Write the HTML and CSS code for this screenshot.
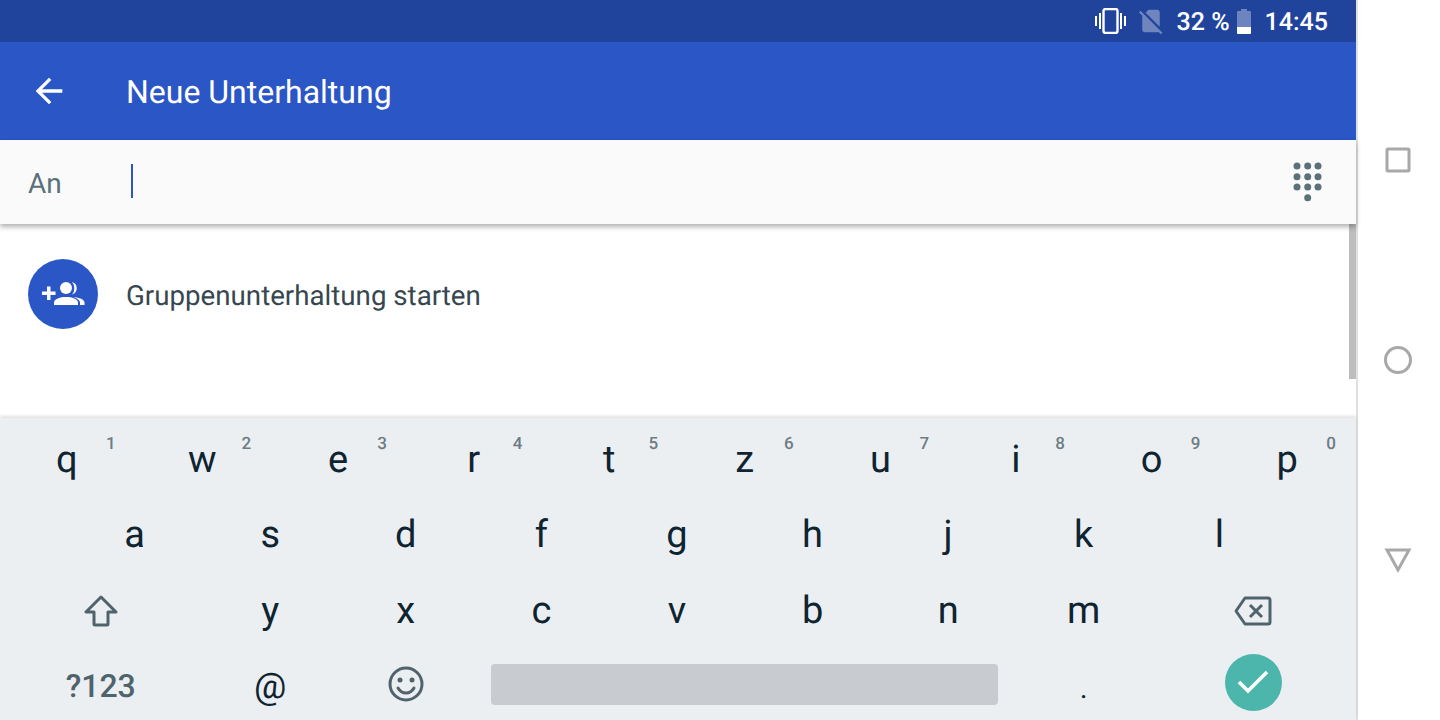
FILE: index.html
```html
<html>
<head>
    <link rel="stylesheet" href="styles.css">
</head>
<body>
    <div class="device">
        <div class="screen">
            <!-- Status bar -->
            <div class="status-bar">
                <svg class="icon-vibrate" viewBox="0 0 31 26">
                    <rect x="0" y="8" width="2" height="10"/>
                    <rect x="4" y="5" width="2" height="16"/>
                    <rect x="25" y="5" width="2" height="16"/>
                    <rect x="29" y="8" width="2" height="10"/>
                    <rect class="phone" x="8.500" y="1" width="14" height="24" rx="2"/>
                </svg>
                <svg class="icon-sim" viewBox="0 0 24 24"><path d="M18.99 5c0-1.1-.89-2-1.99-2h-7L7.66 5.34 19 16.68 18.99 5zM3.65 3.88L2.38 5.15 5 7.77V19c0 1.1.9 2 2 2h10.01c.35 0 .67-.1.96-.26l1.88 1.88 1.27-1.27L3.65 3.88z"/></svg>
                <span class="battery-text">32 %</span>
                <svg class="icon-battery" viewBox="0 0 14 25">
                    <path class="battery-empty" d="M4 0h6v2h3a1 1 0 0 1 1 1v15H0V3a1 1 0 0 1 1-1h3z"/>
                    <path d="M0 18h14v6a1 1 0 0 1-1 1H1a1 1 0 0 1-1-1z"/>
                </svg>
                <span class="clock">14:45</span>
            </div>

            <!-- Toolbar -->
            <div class="toolbar">
                <svg class="icon-back" viewBox="0 0 24 24"><path d="M20 11H7.83l5.59-5.59L12 4l-8 8 8 8 1.41-1.41L7.83 13H20v-2z"/></svg>
                <div class="toolbar-title">Neue Unterhaltung</div>
            </div>

            <!-- Recipient field -->
            <div class="to-field">
                <span class="to-label">An</span>
                <span class="caret"></span>
                <svg class="icon-dialpad" viewBox="0 0 30 40">
                    <circle cx="4" cy="4" r="3.5"/><circle cx="14.7" cy="4" r="3.5"/><circle cx="25" cy="4" r="3.5"/>
                    <circle cx="4" cy="14.7" r="3.5"/><circle cx="14.7" cy="14.7" r="3.5"/><circle cx="25" cy="14.7" r="3.5"/>
                    <circle cx="4" cy="25" r="3.5"/><circle cx="14.7" cy="25" r="3.5"/><circle cx="25" cy="25" r="3.5"/>
                    <circle cx="14.7" cy="35.7" r="3.5"/>
                </svg>
            </div>

            <!-- Contact list -->
            <div class="list">
                <div class="list-row">
                    <svg class="group-avatar" viewBox="0 0 70 70">
                        <circle class="avatar-bg" cx="35" cy="35" r="35"/>
                        <path d="M14 32.500h5v-5h3.500v5h5v3.500h-5v5H19v-5h-5z"/>
                        <circle cx="38" cy="29" r="6"/>
                        <path d="M26 46v-2.500c0-3.500 6-5.500 12-5.500s12 2 12 5.500V46z"/>
                        <path d="M44 23a6.500 6.500 0 0 1 0 12.500 9.500 9.500 0 0 0 0-12.500z"/>
                        <path d="M45.500 38c5.500 .5 11 2.500 11 5.500V46H52v-2.500c0-2-2.500-4-6.500-5.500z"/>
                    </svg>
                    <span class="list-text">Gruppenunterhaltung starten</span>
                </div>
                <div class="scroll-thumb"></div>
            </div>

            <!-- Keyboard -->
            <div class="keyboard">
                <div class="key-row">
                    <div class="key">q<span class="hint">1</span></div>
                    <div class="key">w<span class="hint">2</span></div>
                    <div class="key">e<span class="hint">3</span></div>
                    <div class="key">r<span class="hint">4</span></div>
                    <div class="key">t<span class="hint">5</span></div>
                    <div class="key">z<span class="hint">6</span></div>
                    <div class="key">u<span class="hint">7</span></div>
                    <div class="key">i<span class="hint">8</span></div>
                    <div class="key">o<span class="hint">9</span></div>
                    <div class="key">p<span class="hint">0</span></div>
                </div>
                <div class="key-row">
                    <div class="key-gap"></div>
                    <div class="key">a</div>
                    <div class="key">s</div>
                    <div class="key">d</div>
                    <div class="key">f</div>
                    <div class="key">g</div>
                    <div class="key">h</div>
                    <div class="key">j</div>
                    <div class="key">k</div>
                    <div class="key">l</div>
                </div>
                <div class="key-row">
                    <div class="key wide">
                        <svg class="icon-shift" viewBox="0 0 34 32"><path d="M17 2L2 17h8v12a1 1 0 0 0 1 1h12a1 1 0 0 0 1-1V17h8z"/></svg>
                    </div>
                    <div class="key">y</div>
                    <div class="key">x</div>
                    <div class="key">c</div>
                    <div class="key">v</div>
                    <div class="key">b</div>
                    <div class="key">n</div>
                    <div class="key">m</div>
                    <div class="key wide">
                        <svg class="icon-backspace" viewBox="0 0 38 30">
                            <path d="M11 2h23a2 2 0 0 1 2 2v22a2 2 0 0 1-2 2H11L2 15z"/>
                            <path d="M16 9l12 12M28 9L16 21"/>
                        </svg>
                    </div>
                </div>
                <div class="key-row">
                    <div class="key wide symbols">?123</div>
                    <div class="key at">@</div>
                    <div class="key">
                        <svg class="icon-emoji" viewBox="0 0 36 36">
                            <circle cx="18" cy="18" r="16"/>
                            <circle class="eye" cx="12" cy="14" r="2.500"/>
                            <circle class="eye" cx="24" cy="14" r="2.500"/>
                            <path d="M10 22c2 3.500 5 5 8 5s6-1.500 8-5"/>
                        </svg>
                    </div>
                    <div class="key space-key"><div class="space-bar"></div></div>
                    <div class="key period">.</div>
                    <div class="key wide">
                        <div class="enter-key">
                            <svg class="icon-check" viewBox="0 0 32 26"><path d="M2 13l9 9L30 3"/></svg>
                        </div>
                    </div>
                </div>
            </div>
        </div>

        <!-- Navigation bar -->
        <div class="nav-bar">
            <svg class="nav-icon" viewBox="0 0 28 28"><rect x="3" y="3" width="22" height="22" rx="1"/></svg>
            <svg class="nav-icon" viewBox="0 0 28 28"><circle cx="14" cy="14" r="12.500"/></svg>
            <svg class="nav-icon" viewBox="0 0 28 28"><path d="M3 4h22L14 24z"/></svg>
        </div>
    </div>
</body>
</html>
```

FILE: styles.css
```css
body {
    margin: 0;
    font-family: Roboto, "Liberation Sans", sans-serif;
    text-rendering: geometricPrecision;
    background-color: #fff;
    overflow: hidden;
}
.device {
    display: flex;
    width: 1440px;
    height: 720px;
}
.screen {
    box-sizing: border-box;
    width: 1358px;
    height: 720px;
    display: flex;
    flex-direction: column;
    border-right: 2px solid #e0e0e0;
}
.status-bar {
    flex: 0 0 42px;
    background-color: #20439c;
    color: #fff;
    display: flex;
    align-items: center;
    justify-content: flex-end;
    padding-right: 28px;
    font-size: 25px;
    font-weight: 500;
}
.status-bar svg {
    fill: #fff;
}
.battery-text,
.clock {
    padding-top: 2px;
}
.icon-vibrate {
    width: 31px;
    height: 26px;
    margin-right: 10px;
}
.status-bar .phone {
    fill: none;
    stroke: #fff;
    stroke-width: 2.400;
}
.icon-sim {
    width: 30px;
    height: 30px;
    margin-right: 11px;
    opacity: 0.35;
}
.battery-text {
    margin-right: 7px;
}
.icon-battery {
    width: 14px;
    height: 25px;
    margin-right: 14px;
}
.battery-empty {
    opacity: 0.35;
}
.toolbar {
    flex: 0 0 98px;
    background-color: #2b56c5;
    display: flex;
    align-items: center;
    padding-left: 29px;
    color: #fff;
}
.icon-back {
    width: 40px;
    height: 40px;
    fill: #fff;
    margin-right: 57px;
}
.toolbar-title {
    font-size: 32px;
    padding-top: 2px;
}
.to-field {
    flex: 0 0 84px;
    background-color: #fafafa;
    display: flex;
    align-items: center;
    padding: 0 33px 0 28px;
    box-shadow: 0 3px 5px rgba(0, 0, 0, 0.3);
    position: relative;
    z-index: 1;
}
.to-label {
    width: 103px;
    font-size: 28px;
    color: #5a7179;
    margin-top: 2px;
}
.caret {
    width: 2px;
    height: 34px;
    background-color: #2b56c5;
    margin-bottom: 2px;
}
.icon-dialpad {
    width: 30px;
    height: 40px;
    margin-left: auto;
    fill: #5a7179;
}
.list {
    flex: 0 0 194px;
    background-color: #fff;
    position: relative;
}
.list-row {
    display: flex;
    align-items: center;
    gap: 28px;
    padding: 35px 0 0 28px;
}
.group-avatar {
    width: 70px;
    height: 70px;
    fill: #fff;
}
.avatar-bg {
    fill: #2b56c5;
}
.list-text {
    font-size: 27.700px;
    color: #37474f;
    padding-top: 2px;
}
.scroll-thumb {
    position: absolute;
    top: 0;
    right: 0;
    width: 7px;
    height: 155px;
    background-color: #bdbdbd;
}
.keyboard {
    flex: 1;
    min-height: 0;
    background-color: #eceff2;
    box-shadow: 0 -2px 3px rgba(0, 0, 0, 0.12);
    position: relative;
    padding-top: 4px;
    display: flex;
    flex-direction: column;
}
.key-row {
    display: flex;
    flex: 0 0 75.500px;
}
.key {
    box-sizing: border-box;
    flex: 0 0 135.600px;
    padding-right: 2px;
    display: flex;
    align-items: center;
    justify-content: center;
    font-size: 38px;
    color: #0e2430;
    position: relative;
}
.key.wide {
    flex-basis: 203.400px;
}
.key-gap {
    flex: 0 0 67.800px;
}
.hint {
    position: absolute;
    top: 12px;
    left: 106px;
    font-size: 17px;
    font-weight: 500;
    color: #6c7d84;
}
.symbols {
    font-size: 32px;
    font-weight: 500;
    color: #4f636c;
}
.at {
    font-size: 36px;
}
.period {
    font-size: 30px;
    padding-top: 4px;
}
.icon-shift {
    width: 34px;
    height: 32px;
    fill: none;
    stroke: #4f636c;
    stroke-width: 3;
    stroke-linejoin: round;
}
.icon-backspace {
    width: 38px;
    height: 30px;
    fill: none;
    stroke: #4f636c;
    stroke-width: 3;
    stroke-linejoin: round;
}
.icon-emoji {
    width: 36px;
    height: 36px;
    margin-bottom: 4px;
    fill: none;
    stroke: #4f636c;
    stroke-width: 3;
    stroke-linecap: round;
}
.eye {
    fill: #4f636c;
    stroke: none;
}
.space-key {
    flex-basis: 542.400px;
}
.space-bar {
    width: 507px;
    height: 41px;
    margin-bottom: 4px;
    background-color: #c8ccd0;
    border-radius: 4px;
}
.enter-key {
    width: 57px;
    height: 57px;
    margin-bottom: 8px;
    border-radius: 50%;
    background-color: #4db6ac;
    display: flex;
    align-items: center;
    justify-content: center;
}
.icon-check {
    width: 32px;
    height: 26px;
    fill: none;
    stroke: #fff;
    stroke-width: 3.500;
}
.nav-bar {
    flex: 1;
    display: flex;
    flex-direction: column;
    align-items: center;
    justify-content: center;
    gap: 172px;
    padding-right: 2px;
}
.nav-icon {
    width: 28px;
    height: 28px;
    fill: none;
    stroke: #a8a8a8;
    stroke-width: 3;
}
```
